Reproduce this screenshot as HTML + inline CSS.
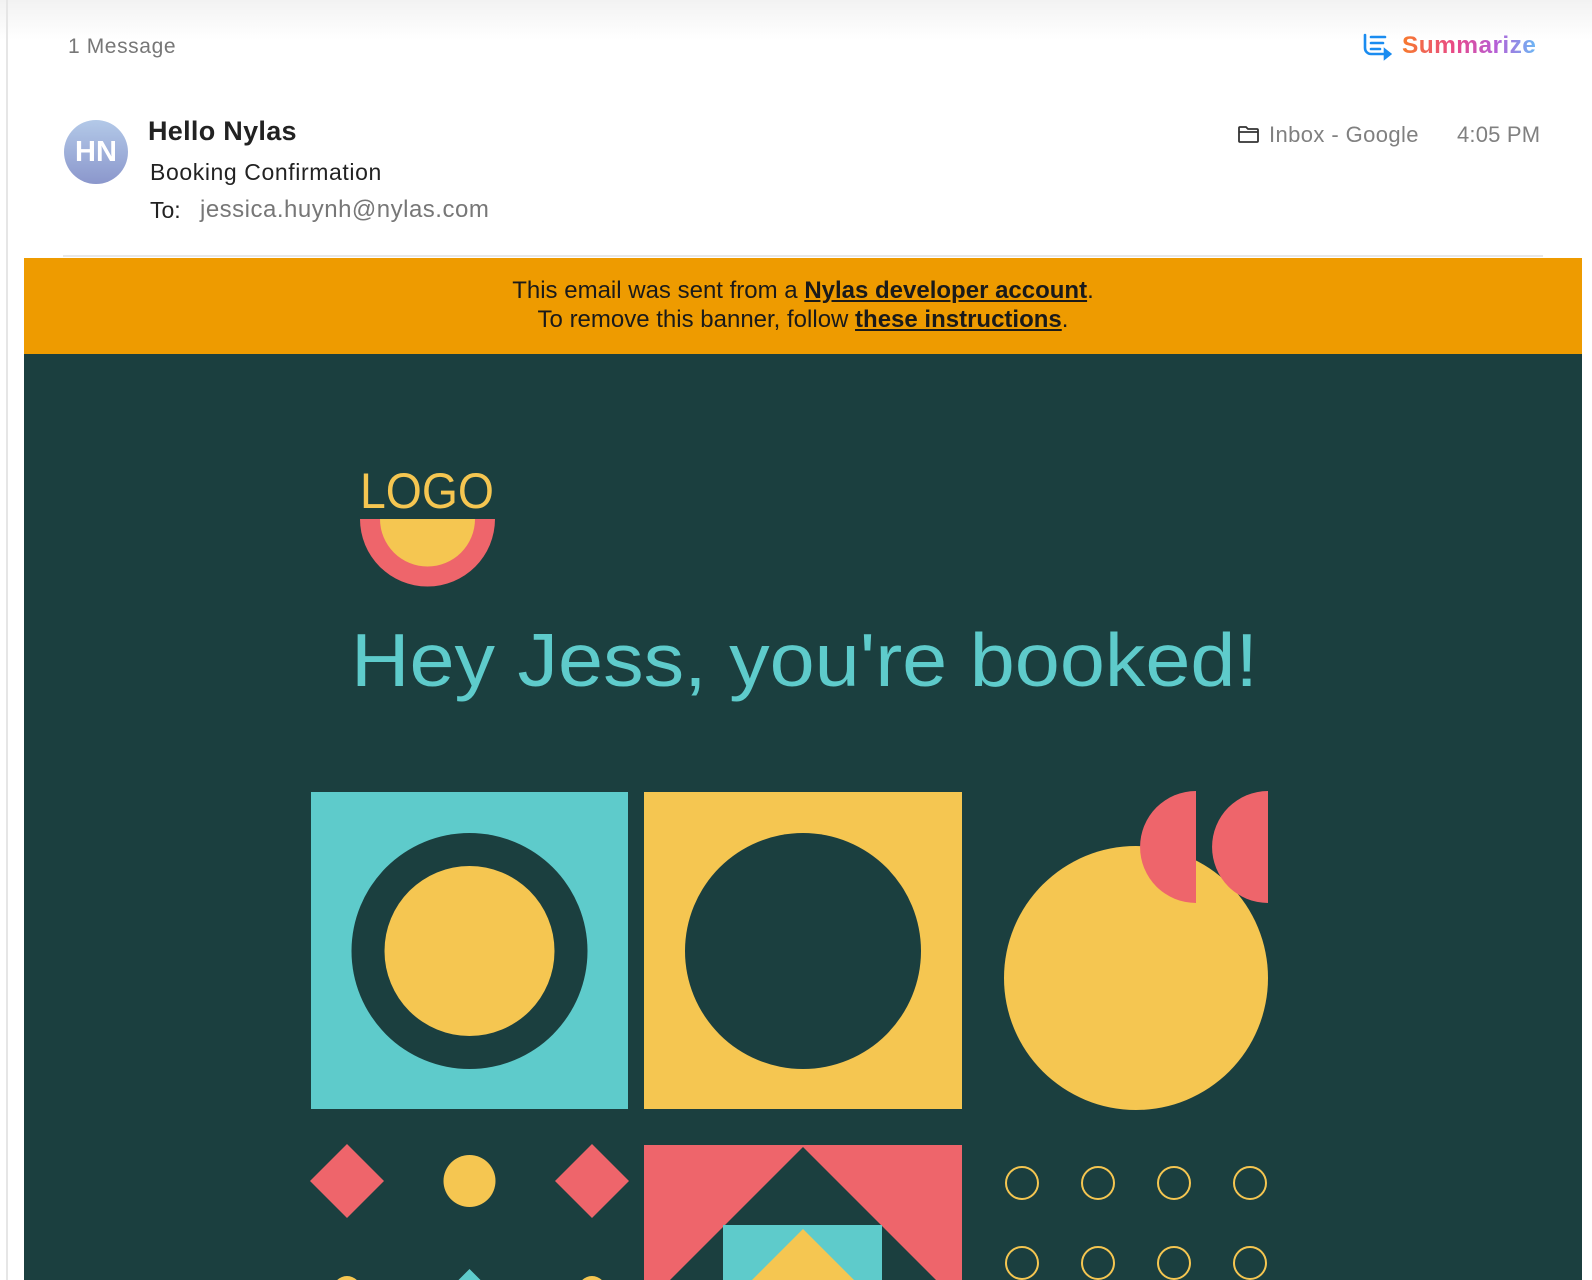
<!DOCTYPE html>
<html><head><meta charset="utf-8"><style>
*{margin:0;padding:0;box-sizing:border-box}
body{width:1592px;height:1280px;overflow:hidden;background:#fff;font-family:"Liberation Sans",sans-serif;position:relative}
.a{position:absolute;white-space:nowrap}
.top{position:absolute;left:0;top:0;width:1592px;height:40px;background:linear-gradient(#f2f2f2,#fff)}
.lb{position:absolute;left:6px;top:0;width:2px;height:1280px;background:#e6e6e6}
.sum{font-weight:bold;font-size:24.5px;letter-spacing:0.4px;background:linear-gradient(90deg,#f77b2c,#e8488a 40%,#b65ed6 70%,#6cb8f5);-webkit-background-clip:text;background-clip:text;color:transparent}
.banner{position:absolute;left:24px;top:258px;width:1558px;height:96px;background:#ee9b00;text-align:center;font-size:24px;color:#1a1a1a;line-height:29px;padding-top:18px}
.banner b{text-decoration:underline}
.dark{position:absolute;left:24px;top:354px;width:1558px;height:926px;background:#1b3f3f;overflow:hidden}
</style></head><body>
<div class="top"></div><div class="lb"></div>
<div class="a" style="left:68px;top:35px;font-size:21px;letter-spacing:0.6px;color:#777">1 Message</div>
<svg class="a" style="left:1362px;top:33px" width="30" height="28" viewBox="0 0 30 28" fill="none" stroke="#1a8cf0" stroke-width="2.6" stroke-linecap="round"><path d="M3 2v13a6 6 0 0 0 6 6h14"/><path d="M9 4h14M9 10h12M9 16h9"/><path d="M23 17l5 4-5 4z" fill="#1a8cf0"/></svg>
<div class="a sum" style="left:1402px;top:32px">Summarize</div>
<div class="a" style="left:64px;top:120px;width:64px;height:64px;border-radius:50%;background:linear-gradient(#b3c9e8,#8b97cc);color:#fff;font-weight:bold;font-size:29px;text-align:center;line-height:64px">HN</div>
<div class="a" style="left:148px;top:116px;font-size:27px;font-weight:bold;color:#222;letter-spacing:0.3px">Hello Nylas</div>
<div class="a" style="left:150px;top:159px;font-size:23px;color:#222;letter-spacing:0.6px">Booking Confirmation</div>
<div class="a" style="left:150px;top:197px;font-size:23px;color:#222">To:</div>
<div class="a" style="left:200px;top:196px;font-size:24px;color:#777;letter-spacing:0.5px">jessica.huynh@nylas.com</div>
<svg class="a" style="left:1237px;top:125px" width="23" height="19" viewBox="0 0 23 19" fill="none" stroke="#333" stroke-width="1.8"><path d="M2 3a1 1 0 0 1 1-1h6l2 2h9a1 1 0 0 1 1 1v11a1 1 0 0 1-1 1H3a1 1 0 0 1-1-1z"/><path d="M2 7h19"/></svg>
<div class="a" style="left:1269px;top:122px;font-size:22px;color:#808080;letter-spacing:0.4px">Inbox - Google</div>
<div class="a" style="left:1457px;top:122px;font-size:22px;color:#808080;letter-spacing:0.2px">4:05 PM</div>
<div class="a" style="left:63px;top:255px;width:1480px;height:2px;background:#e8e8e8"></div>
<div class="banner">This email was sent from a <b>Nylas developer account</b>.<br>To remove this banner, follow <b>these instructions</b>.</div>
<div class="dark"></div>
<svg class="a" style="left:0;top:354px" width="1592" height="926" viewBox="0 354 1592 926">
<text x="360" y="508" font-family="Liberation Sans,sans-serif" font-size="50" fill="#f5c651" textLength="134" lengthAdjust="spacingAndGlyphs">LOGO</text>
<path d="M360 519h135a67.5 67.5 0 0 1-135 0z" fill="#ee656b"/>
<path d="M380 519h95a47.5 47.5 0 0 1-95 0z" fill="#f5c651"/>
<text x="351" y="686" font-family="Liberation Sans,sans-serif" font-size="75" fill="#5ecbcb" textLength="907" lengthAdjust="spacingAndGlyphs">Hey Jess, you're booked!</text>
<rect x="311" y="792" width="317" height="317" fill="#5ecbcb"/>
<circle cx="469.5" cy="951" r="118" fill="#1b3f3f"/><circle cx="469.5" cy="951" r="85" fill="#f5c651"/>
<rect x="644" y="792" width="318" height="317" fill="#f5c651"/>
<circle cx="803" cy="951" r="118" fill="#1b3f3f"/>
<circle cx="1136" cy="978" r="132" fill="#f5c651"/>
<path d="M1196 791v112a56 56 0 0 1 0-112z" fill="#ee656b"/>
<path d="M1268 791v112a56 56 0 0 1 0-112z" fill="#ee656b"/>
<path d="M347 1144l37 37-37 37-37-37z" fill="#ee656b"/>
<circle cx="469.5" cy="1181" r="26" fill="#f5c651"/>
<path d="M592 1144l37 37-37 37-37-37z" fill="#ee656b"/>
<rect x="644" y="1145" width="318" height="140" fill="#ee656b"/>
<path d="M803 1147l140 140H663z" fill="#1b3f3f"/>
<rect x="723" y="1225" width="159" height="60" fill="#5ecbcb"/>
<path d="M803 1229l60 60H743z" fill="#f5c651"/>
<path d="M469.5 1269l14 14h-28z" fill="#5ecbcb"/>
<circle cx="347" cy="1290" r="14" fill="#f5c651"/><circle cx="592" cy="1290" r="14" fill="#f5c651"/>
<g fill="none" stroke="#f5c651" stroke-width="2">
<circle cx="1022" cy="1183" r="16"/><circle cx="1098" cy="1183" r="16"/><circle cx="1174" cy="1183" r="16"/><circle cx="1250" cy="1183" r="16"/>
<circle cx="1022" cy="1263" r="16"/><circle cx="1098" cy="1263" r="16"/><circle cx="1174" cy="1263" r="16"/><circle cx="1250" cy="1263" r="16"/>
</g>
</svg>
</body></html>
